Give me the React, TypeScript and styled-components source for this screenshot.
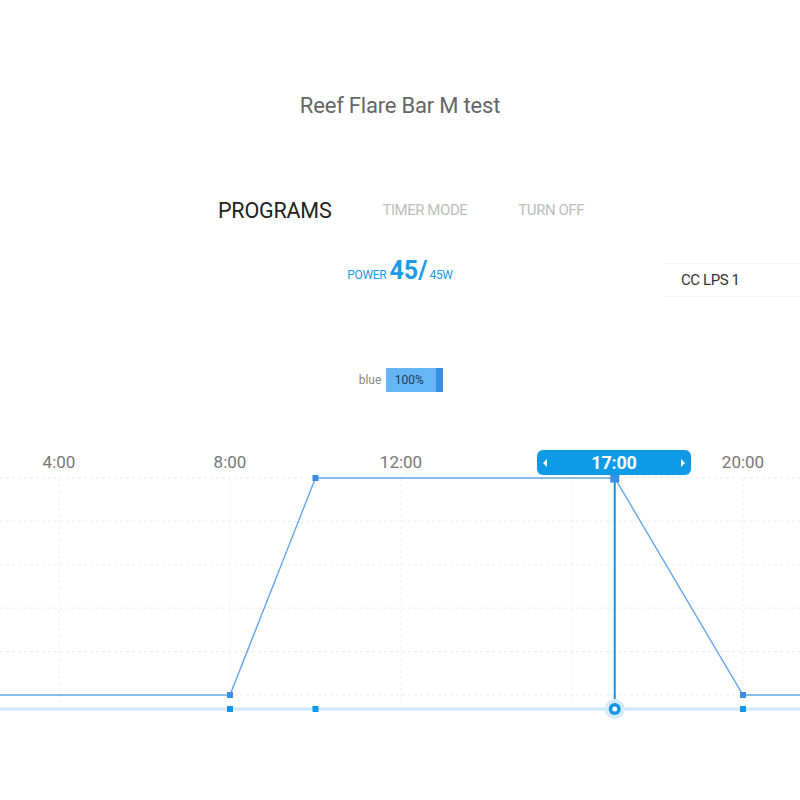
import React from "react";
import styled, { createGlobalStyle } from "styled-components";

const GlobalStyle = createGlobalStyle`
  html, body {
    margin: 0;
    padding: 0;
    background: #ffffff;
    overflow-x: hidden;
  }
  body {
    font-family: Roboto, "Liberation Sans", sans-serif;
  }
`;

const Page = styled.div`
  width: 800px;
  display: flex;
  flex-direction: column;
`;

const Title = styled.h1`
  margin: 91px 0 0;
  height: 30px;
  line-height: 30px;
  text-align: center;
  font-size: 22px;
  font-weight: 400;
  color: #666;
  letter-spacing: -0.2px;
`;

const Tabs = styled.div`
  margin-top: 74px;
  height: 30px;
  display: flex;
  justify-content: center;
  align-items: center;
  gap: 51px;
  padding-left: 2px;
`;

const Tab = styled.div<{ $active?: boolean }>`
  font-size: ${(p) => (p.$active ? "21.5px" : "15px")};
  color: ${(p) => (p.$active ? "#222" : "#bdbdbd")};
  letter-spacing: ${(p) => (p.$active ? "-0.2px" : "-0.45px")};
  text-transform: uppercase;
`;

const PowerRow = styled.div`
  margin-top: 30px;
  height: 46px;
  display: grid;
  grid-template-columns: 1fr auto 1fr;
`;

const Power = styled.div`
  grid-column: 2;
  height: 32px;
  display: flex;
  align-items: baseline;
  justify-content: center;
  color: #1a9be8;
  padding-top: 1px;
`;

const PowerSmall = styled.span`
  font-size: 12px;
  letter-spacing: -0.3px;
`;

const PowerBig = styled.span`
  font-size: 25px;
  font-weight: 700;
  margin: 0 2px 0 3px;
`;

const SelectCell = styled.div`
  display: flex;
  justify-content: flex-end;
`;

const ProgramSelect = styled.div`
  margin-top: 8px;
  margin-right: -20px;
  width: 155px;
  height: 34px;
  box-sizing: border-box;
  border-top: 1px solid #f3f3f3;
  border-bottom: 1px solid #f3f3f3;
  display: flex;
  align-items: center;
  padding-left: 16px;
  font-size: 15px;
  color: #333;
  letter-spacing: -0.4px;
`;

const ChannelRow = styled.div`
  margin-top: 67px;
  height: 24px;
  display: flex;
  justify-content: center;
  align-items: center;
  gap: 5px;
  padding-left: 2px;
`;

const ChannelLabel = styled.span`
  font-size: 12px;
  color: #888;
`;

const ChannelBar = styled.div`
  width: 57px;
  height: 24px;
  display: flex;
  background: #66b6f7;
`;

const ChannelFill = styled.div`
  flex: 1;
  display: flex;
  align-items: center;
  justify-content: center;
  font-size: 12px;
  color: #22384f;
  padding-right: 4px;
`;

const ChannelHandle = styled.div`
  width: 7px;
  background: #3a8de0;
`;

const ChartWrap = styled.div`
  position: relative;
  margin-top: 48px;
  height: 290px;
`;

const TimePill = styled.div`
  position: absolute;
  left: 537px;
  top: 10px;
  width: 154px;
  height: 25px;
  border-radius: 6px;
  background: #0f9ae8;
  display: flex;
  align-items: center;
  justify-content: space-between;
  padding: 0 6px;
  box-sizing: border-box;
  color: #fff;
`;

const PillTime = styled.span`
  font-size: 18px;
  font-weight: 700;
  letter-spacing: -0.2px;
`;

const Arrow = styled.span<{ $dir: "left" | "right" }>`
  width: 0;
  height: 0;
  border-top: 4px solid transparent;
  border-bottom: 4px solid transparent;
  ${(p) =>
    p.$dir === "left"
      ? "border-right: 4px solid #fff;"
      : "border-left: 4px solid #fff;"}
`;

const hx = (h: number) => 59 + (h - 4) * 42.75;
const rows = [38, 81.4, 124.8, 168.2, 211.6, 255];
const labels = [4, 8, 12, 16, 20];
const points: [number, number][] = [
  [0, 255],
  [8, 255],
  [10, 38],
  [17, 38],
  [20, 255],
  [24, 255],
];
const baseY = 269;

function Chart() {
  const path = points.map(([h, y], i) => `${i ? "L" : "M"}${hx(h)} ${y}`).join(" ");
  return (
    <ChartWrap>
      <svg width="800" height="290" viewBox="0 0 800 290">
        {rows.map((y) => (
          <line key={y} x1="0" x2="800" y1={y} y2={y} stroke="#ebebeb" strokeDasharray="3 3" />
        ))}
        {[0, ...labels, 24].map((h) => (
          <line key={h} x1={hx(h)} x2={hx(h)} y1="38" y2="262" stroke="#eeeeee" strokeDasharray="3 3" />
        ))}
        {labels
          .filter((h) => h !== 16)
          .map((h) => (
            <text
              key={h}
              x={hx(h)}
              y="28"
              textAnchor="middle"
              fontFamily="Roboto, sans-serif"
              fontSize="17"
              fill="#777"
            >
              {h}:00
            </text>
          ))}
        <line x1="0" x2="800" y1={baseY} y2={baseY} stroke="#cde8f9" strokeWidth="3" />
        <path d={path} fill="none" stroke="#63a6ea" strokeWidth="1.4" />
        <line x1={hx(17)} x2={hx(17)} y1="38" y2={baseY} stroke="#1196e8" strokeWidth="2" />
        {[8, 10, 20].map((h) => (
          <rect key={h} x={hx(h) - 3} y={(h === 10 ? 38 : 255) - 3} width="6" height="6" fill="#3b8ee4" />
        ))}
        <rect x={hx(17) - 4.5} y={38 - 4.5} width="9" height="9" fill="#3b8ee4" />
        {[8, 10, 20].map((h) => (
          <rect key={`b${h}`} x={hx(h) - 3} y={baseY - 3} width="6" height="6" fill="#1196e8" />
        ))}
        <circle cx={hx(17)} cy={baseY} r="10" fill="#d3ebfb" />
        <circle cx={hx(17)} cy={baseY} r="6" fill="#1196e8" />
        <circle cx={hx(17)} cy={baseY} r="2.5" fill="#fff" />
      </svg>
      <TimePill>
        <Arrow $dir="left" />
        <PillTime>17:00</PillTime>
        <Arrow $dir="right" />
      </TimePill>
    </ChartWrap>
  );
}

export default function App() {
  return (
    <Page>
      <GlobalStyle />
      <Title>Reef Flare Bar M test</Title>
      <Tabs>
        <Tab $active>Programs</Tab>
        <Tab>Timer Mode</Tab>
        <Tab>Turn Off</Tab>
      </Tabs>
      <PowerRow>
        <Power>
          <PowerSmall>POWER</PowerSmall>
          <PowerBig>45/</PowerBig>
          <PowerSmall>45W</PowerSmall>
        </Power>
        <SelectCell>
          <ProgramSelect>CC LPS 1</ProgramSelect>
        </SelectCell>
      </PowerRow>
      <ChannelRow>
        <ChannelLabel>blue</ChannelLabel>
        <ChannelBar>
          <ChannelFill>100%</ChannelFill>
          <ChannelHandle />
        </ChannelBar>
      </ChannelRow>
      <Chart />
    </Page>
  );
}
